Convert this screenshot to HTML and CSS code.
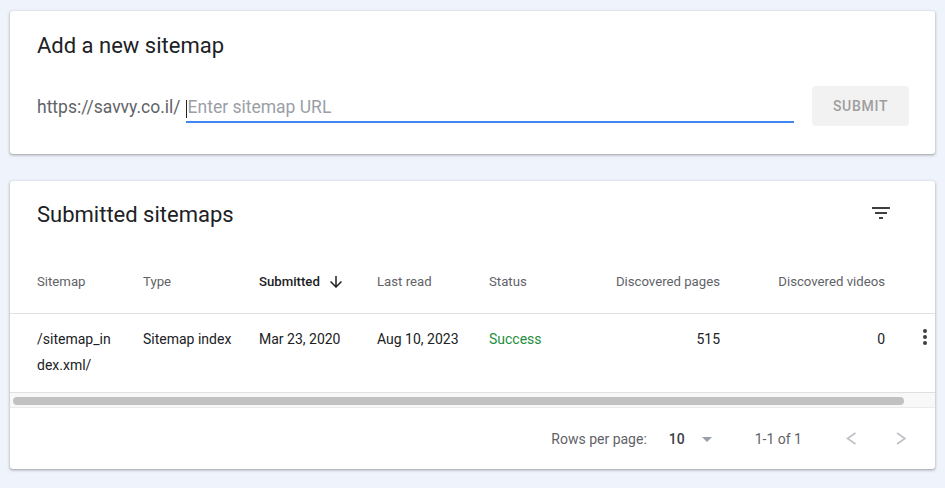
FILE: index.html
```html
<!DOCTYPE html>
<html lang="en">
<head>
<meta charset="utf-8">
<title>Sitemaps</title>
<link rel="stylesheet" href="styles.css">
</head>
<body>
<main class="page">
  <section class="card add-card">
    <h2 class="card-title">Add a new sitemap</h2>
    <div class="add-row">
      <span class="url-prefix">https://savvy.co.il/</span>
      <div class="url-field"><span class="caret"></span><span class="placeholder">Enter sitemap URL</span></div>
      <button class="submit-btn" type="button">SUBMIT</button>
    </div>
  </section>

  <section class="card list-card">
    <div class="list-head">
      <h2 class="card-title">Submitted sitemaps</h2>
      <svg class="filter-icon" viewBox="0 0 24 24"><path d="M10 18h4v-2h-4v2zM3 6v2h18V6H3zm3 7h12v-2H6v2z"/></svg>
    </div>

    <div class="trow head-row">
      <div class="cell">Sitemap</div>
      <div class="cell">Type</div>
      <div class="cell sorted">Submitted<svg class="sort-icon" viewBox="0 0 24 24"><path d="M20 12l-1.41-1.41L13 16.17V4h-2v12.17l-5.58-5.59L4 12l8 8 8-8z"/></svg></div>
      <div class="cell">Last read</div>
      <div class="cell">Status</div>
      <div class="cell num">Discovered pages</div>
      <div class="cell num">Discovered videos</div>
      <div class="cell"></div>
    </div>

    <div class="trow data-row">
      <div class="cell wrap">/sitemap_index.xml/</div>
      <div class="cell">Sitemap index</div>
      <div class="cell">Mar 23, 2020</div>
      <div class="cell">Aug 10, 2023</div>
      <div class="cell success">Success</div>
      <div class="cell num">515</div>
      <div class="cell num">0</div>
      <div class="cell kebab"><svg viewBox="0 0 22 24"><circle cx="12" cy="6" r="2"/><circle cx="12" cy="12" r="2"/><circle cx="12" cy="18" r="2"/></svg></div>
    </div>

    <div class="hscroll"><div class="thumb"></div></div>

    <div class="pager">
      <span class="rows-label">Rows per page:</span>
      <span class="rows-value">10</span>
      <svg class="drop-icon" viewBox="0 0 24 24"><path d="M7 10l5 5 5-5z"/></svg>
      <span class="range">1-1 of 1</span>
      <svg class="nav-icon prev" viewBox="0 0 24 24"><path d="M16.5 6 L8.5 11.5 L16.5 17"/></svg>
      <svg class="nav-icon next" viewBox="0 0 24 24"><path d="M8 6 L16 11.5 L8 17"/></svg>
    </div>
  </section>
</main>
</body>
</html>
```

FILE: styles.css
```css
* { box-sizing: border-box; }
html, body { margin: 0; }
body {
  background: #eff3fb;
  font-family: Roboto, "Noto Sans", Arial, sans-serif;
  color: #202124;
}
.page {
  padding: 11px 10px;
  display: flex;
  flex-direction: column;
  gap: 27px;
}
.card {
  background: #fff;
  border-radius: 3px;
  box-shadow: 0 1px 2px 0 rgba(60,64,67,.3), 0 1px 3px 1px rgba(60,64,67,.15);
}
.card-title {
  margin: 0;
  font-size: 22px;
  line-height: 28px;
  font-weight: 400;
  color: #202124;
}

/* Add card */
.add-card {
  height: 143px;
  padding: 21px 26px 28px 27px;
}
.add-row {
  display: flex;
  align-items: flex-end;
  margin-top: 26px;
  height: 40px;
}
.url-prefix {
  font-size: 17.5px;
  line-height: 24px;
  color: #5f6368;
  margin: 0 5px 7px 0;
  white-space: nowrap;
}
.url-field {
  flex: 1;
  display: flex;
  align-items: flex-end;
  height: 28px;
  padding-bottom: 2px;
  border-bottom: 2px solid #4285f4;
  margin: 0 18px 3px 0;
}
.caret {
  width: 1px;
  height: 18px;
  background: #202124;
  margin: 0 1px 1px 0;
}
.placeholder {
  font-size: 17.5px;
  line-height: 24px;
  color: #9aa0a6;
}
.submit-btn {
  width: 97px;
  height: 40px;
  border: 0;
  border-radius: 4px;
  background: #f2f2f2;
  color: #9e9e9e;
  font-family: Roboto, Arial, sans-serif;
  font-size: 14px;
  font-weight: 500;
  letter-spacing: .7px;
  padding: 0;
}

/* List card */
.list-card {
  height: 288px;
  padding-top: 20px;
}
.list-head {
  display: flex;
  justify-content: space-between;
  align-items: flex-start;
  height: 28px;
  padding: 0 42px 0 27px;
}
.filter-icon {
  width: 24px;
  height: 24px;
  fill: #3c4043;
}
.trow {
  display: grid;
  grid-template-columns: 106px 116px 118px 112px 111px 120px 165px 50px;
  padding-left: 27px;
  border-bottom: 1px solid #e0e0e0;
}
.head-row {
  padding-top: 43px;
  padding-bottom: 21px;
  font-size: 13.2px;
  line-height: 20px;
  color: #5f6368;
}
.data-row {
  padding-top: 12px;
  padding-bottom: 14px;
  font-size: 14px;
  line-height: 26px;
  color: #202124;
}
.cell.wrap {
  padding-right: 28px;
  word-break: break-all;
}
.num { text-align: right; }
.sorted {
  display: flex;
  align-items: center;
  color: #202124;
  font-weight: 500;
}
.sort-icon {
  width: 18px;
  height: 18px;
  margin-left: 7px;
  fill: #202124;
}
.success { color: #1e8e3e; }
.kebab {
  padding-left: 28px;
}
.kebab svg {
  display: block;
  width: 22px;
  height: 24px;
  margin-top: -1px;
  fill: #3c4043;
}

/* Fake horizontal scrollbar */
.hscroll {
  height: 15px;
  background: #f8f8f8;
  border-bottom: 1px solid #ebebeb;
  padding: 4px 0 0 3px;
}
.thumb {
  width: 891px;
  height: 8px;
  border-radius: 4px;
  background: #c1c1c1;
}

/* Pagination */
.pager {
  height: 61px;
  display: flex;
  align-items: center;
  justify-content: flex-end;
  padding-right: 22px;
  font-size: 14px;
  line-height: 20px;
  color: #5f6368;
}
.rows-value {
  margin-left: 22px;
  color: #3c4043;
  font-weight: 500;
}
.drop-icon {
  width: 24px;
  height: 24px;
  margin-left: 10px;
  fill: #9aa0a6;
}
.range { margin-left: 36px; }
.nav-icon {
  width: 24px;
  height: 24px;
  fill: none;
  stroke: #bdc1c6;
  stroke-width: 1.6;
}
.prev { margin-left: 37px; }
.next { margin-left: 26px; }
```
